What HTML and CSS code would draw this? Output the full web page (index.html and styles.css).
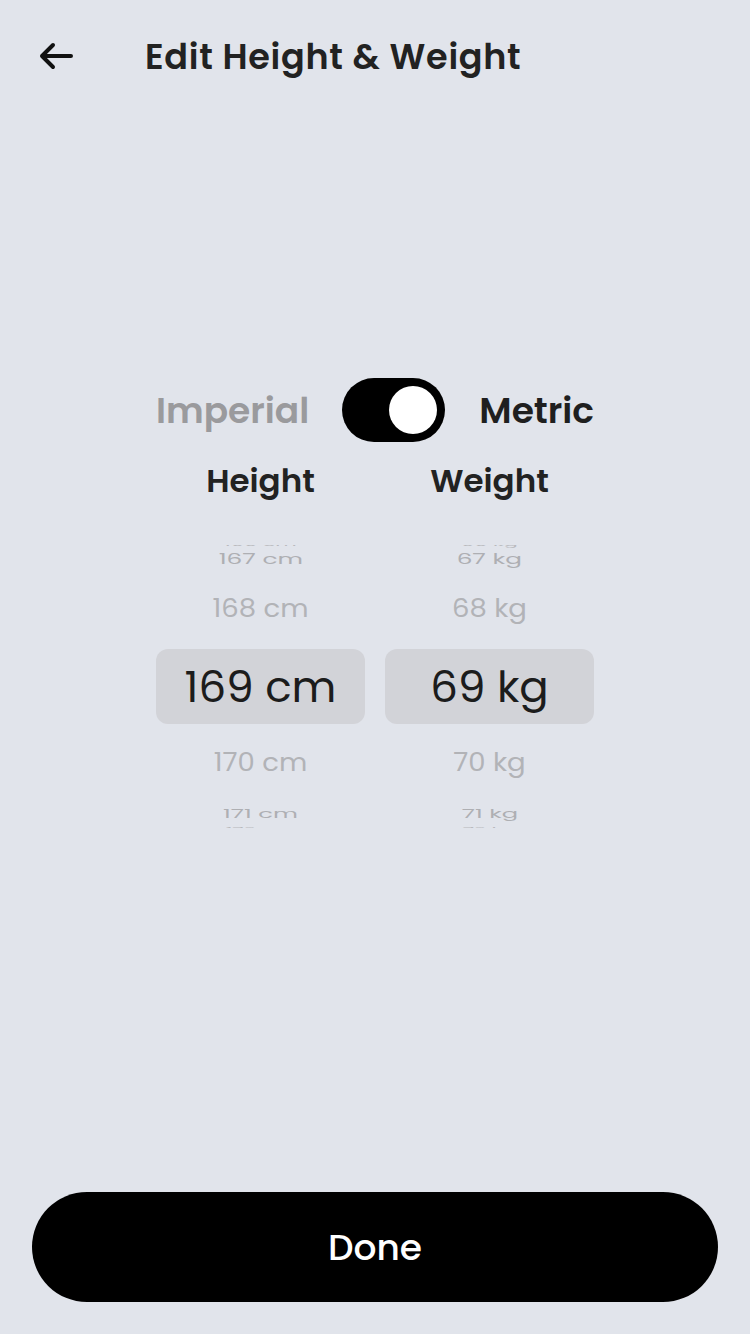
FILE: index.html
```html
<!DOCTYPE html>
<html lang="en">
<head>
<meta charset="utf-8">
<title>Edit Height &amp; Weight</title>
<link rel="stylesheet" href="styles.css">
</head>
<body>
<div class="screen">
  <header class="topbar">
    <button class="back" aria-label="Back">
      <svg width="36" height="32" viewBox="0 0 36 32"><path d="M33 16H4M15 5L4 16l11 11" fill="none" stroke="#111" stroke-width="4" stroke-linecap="round" stroke-linejoin="round"/></svg>
    </button>
    <h1 class="title">Edit Height &amp; Weight</h1>
  </header>

  <main class="content">
    <div class="units">
      <span class="unit unit-off">Imperial</span>
      <div class="switch"><div class="knob"></div></div>
      <span class="unit unit-on">Metric</span>
    </div>

    <div class="pickers">
      <div class="col">
        <div class="col-label">Height</div>
        <div class="wheel">
          <div class="list">
            <div class="slot s-edge1"><span class="t t-edge">166 cm</span></div>
            <div class="slot s-far"><span class="t t-far">167 cm</span></div>
            <div class="slot s-near-top"><span class="t t-near">168 cm</span></div>
            <div class="slot s-sel"><span class="t t-sel">169 cm</span></div>
            <div class="slot s-near-bot"><span class="t t-near">170 cm</span></div>
            <div class="slot s-far2"><span class="t t-far t-far-b">171 cm</span></div>
            <div class="slot s-edge2"><span class="t t-edge">172 cm</span></div>
          </div>
        </div>
      </div>
      <div class="col">
        <div class="col-label">Weight</div>
        <div class="wheel">
          <div class="list">
            <div class="slot s-edge1"><span class="t t-edge">66 kg</span></div>
            <div class="slot s-far"><span class="t t-far">67 kg</span></div>
            <div class="slot s-near-top"><span class="t t-near">68 kg</span></div>
            <div class="slot s-sel"><span class="t t-sel">69 kg</span></div>
            <div class="slot s-near-bot"><span class="t t-near">70 kg</span></div>
            <div class="slot s-far2"><span class="t t-far t-far-b">71 kg</span></div>
            <div class="slot s-edge2"><span class="t t-edge">72 kg</span></div>
          </div>
        </div>
      </div>
    </div>
  </main>

  <footer class="footer">
    <button class="done">Done</button>
  </footer>
</div>
</body>
</html>
```

FILE: styles.css
```css
* { box-sizing: border-box; }
html, body { margin: 0; padding: 0; }
body {
  background: #e1e4eb;
  font-family: "Poppins", "Open Sans", "Noto Sans", sans-serif;
  color: #222;
}
.screen {
  width: 750px;
  height: 1334px;
  display: flex;
  flex-direction: column;
}
.topbar {
  height: 112px;
  display: flex;
  align-items: center;
  padding-left: 38px;
}
.back {
  border: 0;
  background: none;
  padding: 0;
  width: 36px;
  height: 32px;
  display: flex;
}
.title {
  margin: 0 0 0 71px;
  font-size: 35px;
  font-weight: 600;
  color: #222;
  letter-spacing: 0.7px;
  white-space: nowrap;
}
.content {
  flex: 1;
  display: flex;
  flex-direction: column;
  align-items: center;
  padding-top: 266px;
}
.units {
  display: flex;
  align-items: center;
  height: 64px;
}
.unit {
  font-size: 36px;
  font-weight: 600;
}
.unit-off { color: #9a9a9d; }
.unit-on { color: #1f1f1f; }
.switch {
  width: 103px;
  height: 64px;
  border-radius: 32px;
  background: #000;
  margin: 0 34px 0 33px;
  display: flex;
  align-items: center;
  justify-content: flex-end;
  padding-right: 8px;
}
.knob {
  width: 48px;
  height: 48px;
  border-radius: 50%;
  background: #fff;
}
.pickers {
  display: grid;
  grid-template-columns: 209px 209px;
  column-gap: 20px;
  margin-top: 19px;
}
.col {
  display: flex;
  flex-direction: column;
  align-items: stretch;
}
.col-label {
  height: 40px;
  line-height: 40px;
  text-align: center;
  font-size: 32.5px;
  font-weight: 600;
  color: #222;
}
.wheel {
  margin-top: 44px;
  height: 283px;
  overflow: hidden;
}
.list {
  margin-top: -5px;
  display: flex;
  flex-direction: column;
}
.slot {
  display: flex;
  align-items: center;
  justify-content: center;
  overflow: visible;
  white-space: nowrap;
}
.s-edge1 { height: 6px; }
.s-far { height: 26px; }
.s-near-top { height: 77px; padding-bottom: 4px; }
.s-sel { height: 75px; background: #d2d3d8; border-radius: 12px; }
.s-near-bot { height: 78px; }
.s-far2 { height: 24px; }
.s-edge2 { height: 6px; }
.t { display: inline-block; line-height: 1; }
.t-sel { font-size: 43.5px; color: #1c1c1c; }
.t-near { font-size: 27.5px; color: #b2b3b7; transform: scaleY(0.9); }
.t-far { font-size: 27.5px; color: #aeafb3; transform: scale(0.9, 0.52); }
.t-far-b { transform: scale(0.88, 0.44); }
.t-edge { font-size: 26px; color: #b8b9bd; transform: scale(0.8, 0.3); }
.footer {
  padding: 0 32px 32px;
}
.done {
  width: 100%;
  height: 110px;
  border: 0;
  border-radius: 55px;
  background: #000;
  color: #fff;
  font-family: "Poppins", "Open Sans", "Noto Sans", sans-serif;
  font-size: 36px;
  font-weight: 500;
}
```
